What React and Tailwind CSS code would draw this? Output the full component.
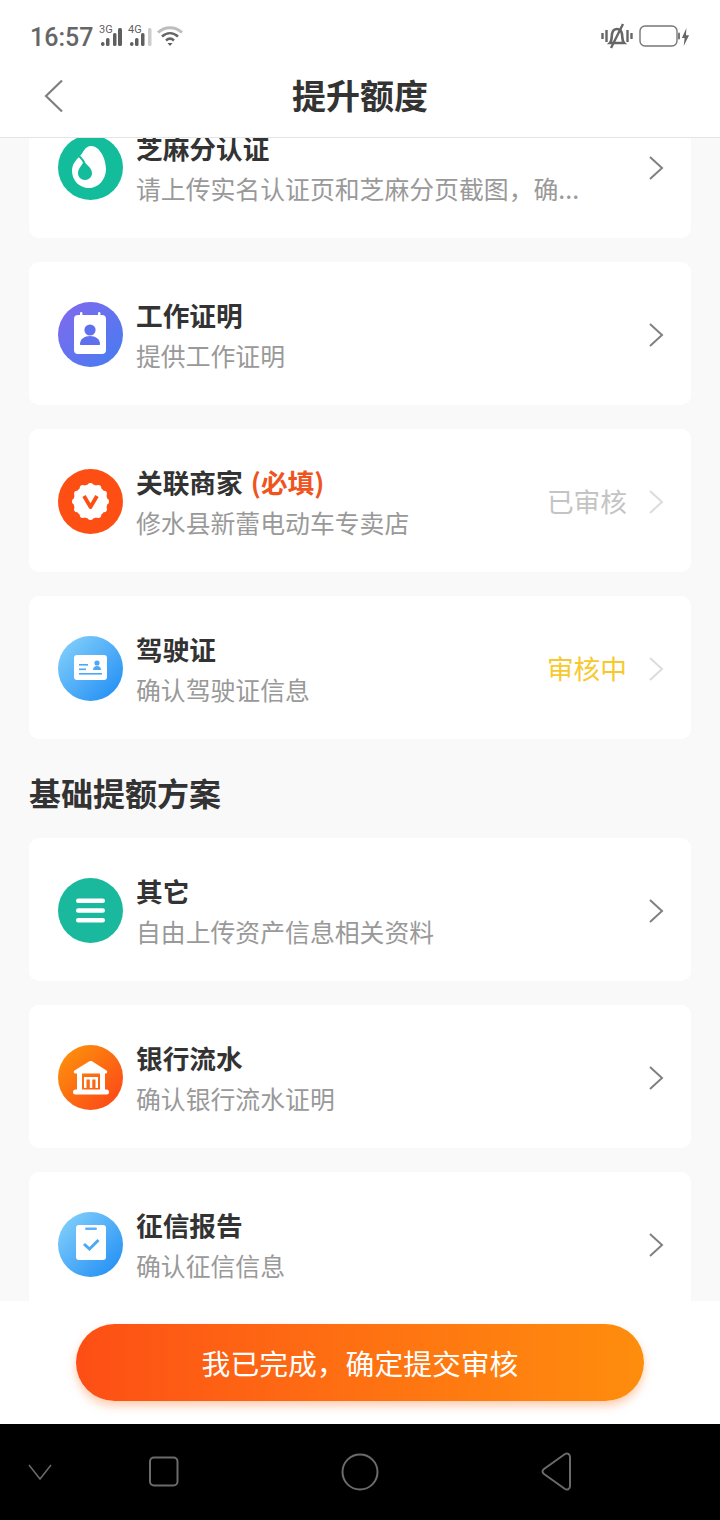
import React from "react";

const Chevron = ({ light }) => (
  <svg width="18" height="26" viewBox="0 0 18 26" fill="none" className="shrink-0">
    <path d="M3 2l12 11L3 24" stroke={light ? "#dcdcdc" : "#808080"} strokeWidth="2" />
  </svg>
);

const Circle = ({ from, to, children, id }) => (
  <svg width="65" height="65" viewBox="0 0 65 65" className="shrink-0">
    <defs>
      <linearGradient id={id} x1="0.1" y1="0.1" x2="0.9" y2="0.9">
        <stop offset="0" stopColor={from} />
        <stop offset="1" stopColor={to} />
      </linearGradient>
    </defs>
    <circle cx="32.5" cy="32.5" r="32.5" fill={`url(#${id})`} />
    {children}
  </svg>
);

const SesameIcon = () => (
  <Circle id="g1" from="#13bd9c" to="#13bd9c">
    <path d="M33 11C42 11 48 24 48 34C48 45 40 53 31 53C21 53 14 45 14 36C14 29 18 25 22 21C25 18 27 11 33 11Z" fill="#fff" />
    <path d="M26 25C26 29 34 32 34 38C34 42 31 45 27 45C23 45 20 42 20 38C20 33 25 30 26 25Z" fill="#13bd9c" />
    <path d="M21 21C23 23 26 25 27 30" stroke="#13bd9c" strokeWidth="2" fill="none" />
  </Circle>
);

const WorkIcon = () => (
  <Circle id="g2" from="#7d6bee" to="#4a7bf0">
    <rect x="16" y="13" width="32" height="39" rx="4" fill="#fff" />
    <rect x="22" y="10" width="2.4" height="6" rx="1.2" fill="#fff" />
    <rect x="40" y="10" width="2.4" height="6" rx="1.2" fill="#fff" />
    <circle cx="32" cy="28" r="5.6" fill="#5f70ee" />
    <path d="M22 42c0-5 4.500-8 10-8s10 3 10 8c0 .6-.4 1-1 1H23c-.6 0-1-.4-1-1z" fill="#5f70ee" />
  </Circle>
);

// scalloped badge: ring of small circles round a disc
const scallops = Array.from({ length: 12 }, (_, i) => {
  const a = (i * Math.PI) / 6;
  return { x: 32.5 + 15.5 * Math.sin(a), y: 32.5 + 15.5 * Math.cos(a) };
});

const MerchantIcon = () => (
  <Circle id="g3" from="#fd4f14" to="#fd4f14">
    <circle cx="32.5" cy="32.5" r="17" fill="#fff" />
    {scallops.map((s, i) => (
      <circle key={i} cx={s.x} cy={s.y} r="3" fill="#fff" />
    ))}
    <path d="M26 27l6.500 11 6.500-11" stroke="#fd4f14" strokeWidth="3.800" fill="none" strokeLinejoin="round" />
  </Circle>
);

const LicenseIcon = () => (
  <Circle id="g4" from="#7fcdfa" to="#2691f5">
    <rect x="16" y="19" width="33" height="25" rx="3" fill="#fff" />
    <rect x="21" y="28" width="9" height="1.600" fill="#4ba8f6" />
    <rect x="21" y="32.500" width="7" height="1.600" fill="#4ba8f6" />
    <circle cx="39" cy="27" r="2.600" fill="#4ba8f6" />
    <path d="M35 34c0-2.500 1.800-4 4-4s4 1.500 4 4z" fill="#4ba8f6" />
    <rect x="21" y="37" width="23" height="1.600" fill="#4ba8f6" />
  </Circle>
);

const MenuIcon = () => (
  <Circle id="g5" from="#1ab89d" to="#1ab89d">
    <rect x="18" y="20.500" width="29" height="4.400" rx="2.200" fill="#fff" />
    <rect x="18" y="30.300" width="29" height="4.400" rx="2.200" fill="#fff" />
    <rect x="18" y="40" width="29" height="4.400" rx="2.200" fill="#fff" />
  </Circle>
);

const BankIcon = () => (
  <Circle id="g6" from="#fd8f0c" to="#fb4a18">
    <path d="M31 16.500c1-.6 2.500-.6 3.500 0l14 9c1.300.9.800 3-.8 3H17.300c-1.600 0-2.100-2.100-.8-3z" fill="#fff" />
    <rect x="19" y="28" width="5" height="18" fill="#fff" />
    <rect x="42" y="28" width="5" height="18" fill="#fff" />
    <rect x="26" y="32" width="14" height="2.500" fill="#fff" />
    <rect x="26" y="32" width="2.500" height="11" fill="#fff" />
    <rect x="31.800" y="32" width="2.500" height="11" fill="#fff" />
    <rect x="37.500" y="32" width="2.500" height="11" fill="#fff" />
    <rect x="15" y="44.500" width="36" height="5" rx="2.500" fill="#fff" />
  </Circle>
);

const CreditIcon = () => (
  <Circle id="g7" from="#7fcdfa" to="#2691f5">
    <rect x="18" y="13" width="30" height="35" rx="3" fill="#fff" />
    <rect x="27" y="15.500" width="12" height="2.400" rx="1.200" fill="#5fb1f7" />
    <path d="M26 32l5.500 5 9-9" stroke="#4ba8f6" strokeWidth="3" fill="none" />
  </Circle>
);

const Card = ({ icon, title, tag, sub, status, statusColor }) => (
  <div className="flex h-[143px] items-center rounded-[10px] bg-white pl-[29px] pr-[26px] pt-[2px]">
    {icon}
    <div className="ml-[14px] min-w-0 flex-1">
      <div className="-ml-[1px] text-[26.7px] font-bold leading-[40px] text-[#333333]">
        {title}
        {tag && <span className="ml-[2px] text-[#f0541e]"> {tag}</span>}
      </div>
      <div className="-ml-[1px] whitespace-nowrap text-[24.85px] leading-[40px] text-[#999999]">{sub}</div>
    </div>
    {status && (
      <span className="mr-[20px] text-[26.7px]" style={{ color: statusColor }}>
        {status}
      </span>
    )}
    <Chevron light={!!status} />
  </div>
);

export default function App() {
  return (
    <div className="flex h-[1520px] w-[720px] flex-col overflow-hidden bg-[#f9f9f9] font-['Noto_Sans_CJK_SC','Noto_Sans',sans-serif]">
      {/* status bar + title */}
      <div className="z-10 h-[138px] shrink-0 border-b border-[#e4e4e4] bg-white">
        <div className="flex h-[72px] items-center justify-between px-[30px]">
          <div className="flex items-center pt-[4px]">
            <span className="font-['Roboto',sans-serif] text-[25px] font-medium text-[#666666]">16:57</span>
            <svg width="88" height="26" viewBox="0 0 88 26" className="ml-[6px] overflow-visible" fill="#5f5f5f">
              <text x="0" y="8" fontSize="11" fontFamily="Roboto, sans-serif">3G</text>
              <rect x="2" y="17" width="3.500" height="4" rx="1.700" />
              <rect x="7" y="13" width="3.500" height="8" rx="1.500" />
              <rect x="14" y="8" width="3.500" height="13" rx="1.500" />
              <rect x="19" y="3" width="4" height="18" rx="1.500" />
              <text x="29" y="8" fontSize="11" fontFamily="Roboto, sans-serif">4G</text>
              <rect x="31" y="17" width="3.500" height="4" rx="1.700" />
              <rect x="36" y="13" width="3.500" height="8" rx="1.500" />
              <rect x="42" y="8" width="3.500" height="13" rx="1.500" />
              <rect x="49" y="3" width="3.500" height="18" rx="1.500" fill="#cccccc" />
              <path d="M59 7.500c7-6.500 17-6.500 24 0" stroke="#bdbdbd" strokeWidth="3" fill="none" />
              <path d="M63 11.500c5-4.500 11-4.500 16 0" stroke="#666666" strokeWidth="2.500" fill="none" />
              <path d="M67 15.500c2.500-2.300 5.500-2.300 8 0" stroke="#666666" strokeWidth="2.500" fill="none" />
              <path d="M68.500 18h5L71 21z" />
            </svg>
          </div>
          <div className="flex items-center">
            <svg width="32" height="28" viewBox="0 0 32 28" fill="none" stroke="#666666">
              <path d="M1.500 11v6M5.500 8v12M26.500 8v12M30.500 11v6" strokeWidth="2.400" />
              <path d="M9 21c2-2 1.500-6 2-9 .5-3 2.500-5 5-5s4.500 2 5 5c.5 3 0 7 2 9z" strokeWidth="2.600" />
              <path d="M22 2L10 26" strokeWidth="2.400" />
            </svg>
            <svg width="42" height="22" viewBox="0 0 42 22" fill="none" className="ml-[6px]">
              <rect x="1" y="1" width="37" height="20" rx="5" stroke="#777777" strokeWidth="1.400" />
              <rect x="39" y="7.500" width="2" height="7" rx="1" fill="#777777" />
            </svg>
            <svg width="9" height="20" viewBox="0 0 10 22" fill="#666666" className="mt-[2px]">
              <path d="M6 1L1 12h3l-1 9 6-12H5.500z" />
            </svg>
          </div>
        </div>
        <div className="relative flex h-[48px] items-center justify-center">
          <svg width="20" height="34" viewBox="0 0 20 34" fill="none" className="absolute left-[44px] top-[7px]">
            <path d="M18 1.500L2 17l16 15.500" stroke="#808080" strokeWidth="2.200" />
          </svg>
          <span className="-mt-[2px] text-[34px] font-bold leading-[48px] text-[#333333]">提升额度</span>
        </div>
      </div>

      {/* scrolled list, first card sits partly under the header */}
      <div className="min-h-0 flex-1 overflow-hidden">
        <div className="mt-[-43px] flex flex-col gap-[24px] px-[29px]">
          <Card icon={<SesameIcon />} title="芝麻分认证" sub="请上传实名认证页和芝麻分页截图，确..." />
          <Card icon={<WorkIcon />} title="工作证明" sub="提供工作证明" />
          <Card icon={<MerchantIcon />} title="关联商家" tag="(必填)" sub="修水县新蕾电动车专卖店" status="已审核" statusColor="#c4c4c4" />
          <Card icon={<LicenseIcon />} title="驾驶证" sub="确认驾驶证信息" status="审核中" statusColor="#f8c92d" />
          <div className="-my-[24px] flex h-[99px] items-center pt-[6px] text-[32px] font-bold text-[#333333]">基础提额方案</div>
          <Card icon={<MenuIcon />} title="其它" sub="自由上传资产信息相关资料" />
          <Card icon={<BankIcon />} title="银行流水" sub="确认银行流水证明" />
          <Card icon={<CreditIcon />} title="征信报告" sub="确认征信信息" />
        </div>
      </div>

      {/* submit */}
      <div className="flex h-[123px] shrink-0 items-start justify-center bg-white pt-[23px]">
        <button className="h-[77px] w-[568px] rounded-full bg-gradient-to-r from-[#fd4e15] to-[#fe8d0d] text-[28.8px] text-white shadow-[0_5px_10px_rgba(253,110,30,0.35)]">
          我已完成，确定提交审核
        </button>
      </div>

      {/* android nav */}
      <div className="relative h-[96px] shrink-0 bg-black">
        <svg width="720" height="96" viewBox="0 0 720 96" fill="none" stroke="#6b6b6b" strokeWidth="2">
          <path d="M29 41l11 14 11-14" strokeWidth="1.500" />
          <rect x="150" y="33.500" width="27.500" height="28" rx="4" />
          <circle cx="360" cy="48" r="17.500" />
          <path d="M570 33v29c0 3-2.500 4.500-5 3l-21-15c-2-1.500-2-3.500 0-5l21-15c2.500-1.500 5 0 5 3z" />
        </svg>
      </div>
    </div>
  );
}
